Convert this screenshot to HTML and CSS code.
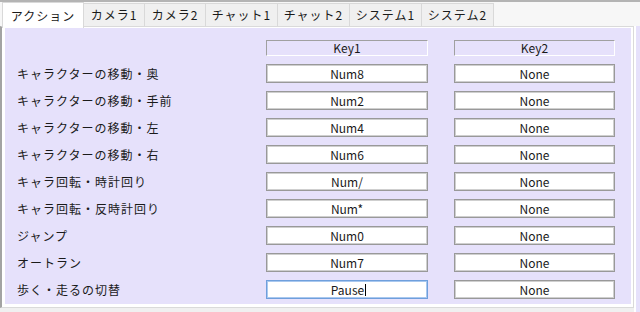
FILE: index.html
```html
<!DOCTYPE html>
<html lang="ja">
<head>
<meta charset="utf-8">
<title>キー設定</title>
<link rel="stylesheet" href="styles.css">
</head>
<body>
<div class="window">
  <div class="tabs">
    <div class="tab active">アクション</div>
    <div class="tab narrow">カメラ1</div>
    <div class="tab narrow">カメラ2</div>
    <div class="tab">チャット1</div>
    <div class="tab">チャット2</div>
    <div class="tab">システム1</div>
    <div class="tab">システム2</div>
  </div>
  <div class="main">
    <div class="frame">
      <div class="panel">
        <div class="grid">
          <div></div>
          <div class="hdr">Key1</div>
          <div class="hdr">Key2</div>

          <div class="label">キャラクターの移動・奥</div>
          <div class="box">Num8</div>
          <div class="box">None</div>

          <div class="label">キャラクターの移動・手前</div>
          <div class="box">Num2</div>
          <div class="box">None</div>

          <div class="label">キャラクターの移動・左</div>
          <div class="box">Num4</div>
          <div class="box">None</div>

          <div class="label">キャラクターの移動・右</div>
          <div class="box">Num6</div>
          <div class="box">None</div>

          <div class="label">キャラ回転・時計回り</div>
          <div class="box">Num/</div>
          <div class="box">None</div>

          <div class="label">キャラ回転・反時計回り</div>
          <div class="box">Num*</div>
          <div class="box">None</div>

          <div class="label">ジャンプ</div>
          <div class="box">Num0</div>
          <div class="box">None</div>

          <div class="label">オートラン</div>
          <div class="box">Num7</div>
          <div class="box">None</div>

          <div class="label">歩く・走るの切替</div>
          <div class="box focus"><span class="caret">Pause</span></div>
          <div class="box">None</div>
        </div>
      </div>
    </div>
    <div class="side"></div>
  </div>
</div>
</body>
</html>
```

FILE: styles.css
```css
html, body {
  margin: 0;
  padding: 0;
}
body {
  width: 640px;
  height: 312px;
  overflow: hidden;
  background: #f0f0f0;
  font-family: "Noto Sans CJK JP", "DejaVu Sans", sans-serif;
  font-size: 12px;
  color: #1a1a1a;
}
.window {
  border-top: 2px solid #b4b4b4;
  height: 310px;
  display: flex;
  flex-direction: column;
}
.tabs {
  display: flex;
  height: 24px;
  padding-left: 2px;
  align-items: flex-end;
  background: #f7f7f7;
  position: relative;
  z-index: 2;
}
.tab {
  width: 73px;
  height: 23px;
  box-sizing: border-box;
  display: flex;
  align-items: center;
  justify-content: center;
  white-space: nowrap;
  letter-spacing: 1px;
  background: #f0f0f0;
  border: 1px solid #d9d9d9;
  border-bottom: none;
  margin-left: -1px;
  line-height: 1;
}
.tab.narrow {
  width: 62px;
}
.tab:first-child {
  margin-left: 0;
}
.tab.active {
  background: #ffffff;
  height: 26px;
  margin-bottom: -2px;
  width: 82px;
  position: relative;
  z-index: 3;
}
.main {
  display: flex;
  flex: 1;
}
.frame {
  width: 634px;
  height: 282px;
  box-sizing: border-box;
  border-left: 2px solid #a3a3a3;
  border-top: 1px solid #dadada;
  border-right: 1px solid #dadada;
  border-bottom: 1px solid #dadada;
  padding: 1px 2px 3px 3px;
  background: #ffffff;
}
.panel {
  background: #e6e1fb;
  height: 100%;
  box-sizing: border-box;
  padding: 12px 0 0 12px;
}
.side {
  flex: 1;
  background: #e6e1fb;
  border-left: 2px solid #ffffff;
}
.grid {
  display: grid;
  grid-template-columns: 223px 162px 161px;
  grid-template-rows: 16px;
  grid-auto-rows: 19px;
  column-gap: 26px;
  row-gap: 8px;
}
.hdr {
  box-sizing: border-box;
  border-top: 1px solid #a0a0a0;
  border-left: 1px solid #a0a0a0;
  border-right: 1px solid #ffffff;
  border-bottom: 1px solid #ffffff;
  display: flex;
  align-items: center;
  justify-content: center;
  line-height: 1;
}
.label {
  display: flex;
  align-items: center;
  letter-spacing: 1px;
  line-height: 1;
  white-space: nowrap;
}
.box {
  box-sizing: border-box;
  background: #ffffff;
  border: 1px solid #999999;
  box-shadow: inset 0 0 0 1px #cfcfcf;
  display: flex;
  align-items: center;
  justify-content: center;
  line-height: 1;
}
.box.focus {
  border-color: #6f9fdc;
  box-shadow: inset 0 0 0 1px #a9c8ef;
}
.caret {
  border-right: 1px solid #000;
  padding-right: 1px;
  margin-left: 3px;
}
```
